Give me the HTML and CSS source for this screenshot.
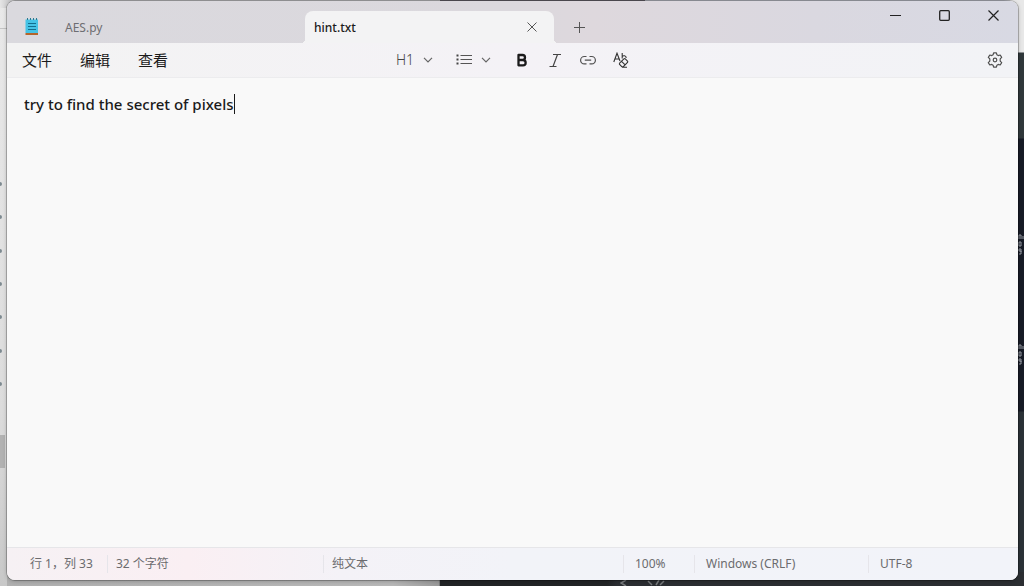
FILE: index.html
```html
<!DOCTYPE html>
<html lang="zh-CN">
<head>
<meta charset="UTF-8">
<meta name="viewport" content="width=device-width, initial-scale=1.0">
<title>hint.txt</title>
<link rel="stylesheet" href="styles.css">
</head>
<body>

<!-- what shows around the window -->
<div class="desktop" aria-hidden="true">
  <div class="desk-top"></div>
  <svg class="desk-left" width="7" height="480" viewBox="0 0 7 480">
    <path d="M0 28.500h7" stroke="#c4c4c4"/>
    <g fill="#7d8a90">
      <circle cx="0" cy="184" r="2"/>
      <circle cx="0" cy="217" r="2"/>
      <circle cx="0" cy="251" r="2"/>
      <circle cx="0" cy="284" r="2"/>
      <circle cx="0" cy="317" r="2"/>
      <circle cx="0" cy="351" r="2"/>
      <circle cx="0" cy="384" r="2"/>
    </g>
    <path d="M0 435h5v33h-5z" fill="#b2b2b2"/>
  </svg>
  <div class="desk-right"></div>
  <svg class="desk-marks" width="6" height="140" viewBox="0 0 6 140">
    <g fill="none" stroke="#9a9ea6">
      <path d="M1 6V2h2v4M5 3v3M1 9h2v4H1zM3 19V16H1v2h2v3H1"/>
      <path d="M1 116v-4h2v4M5 113v3M1 119h2v4H1zM3 129v-3H1v2h2v3H1"/>
    </g>
  </svg>
  <div class="desk-bottom"></div>
  <svg class="desk-code" width="50" height="6" viewBox="0 0 50 6">
    <path d="M6 0l-5 3 5 3M28 1l4 4M36 5l3-5M40 5l4-4" fill="none" stroke="#777a7c" stroke-width="1.500"/>
  </svg>
</div>

<div class="window">
  <header class="titlebar">
    <svg class="app-icon" width="14" height="18" viewBox="0 0 14 18">
      <path d="M.5 1.500h12.500V15H.5z" fill="#45c3e6"/>
      <path d="M.5 15h12.500v2H.5z" fill="#b5652b"/>
      <path d="M2.500 0v2M5.500 0v2M8.500 0v2M11.500 0v2" stroke="#2b7890"/>
      <path d="M3 5.500h8M3 8.500h8M3 11.500h8" stroke="#136f8e" stroke-width="1.100"/>
    </svg>
    <button class="tab" type="button">AES.py</button>
    <div class="tab tab-active">
      <span>hint.txt</span>
      <button class="tab-close" type="button" aria-label="关闭标签页">
        <svg width="10" height="10" viewBox="0 0 10 10"><path d="M.5.5l9 9M9.500.5l-9 9" stroke="#555"/></svg>
      </button>
    </div>
    <button class="tab-new" type="button" aria-label="新建标签页">
      <svg width="11" height="11" viewBox="0 0 11 11"><path d="M5.500 0v11M0 5.500h11" stroke="#555"/></svg>
    </button>
    <div class="caption">
      <button type="button" aria-label="最小化">
        <svg width="11" height="11" viewBox="0 0 11 11"><path d="M0 5.500h11" stroke="#222"/></svg>
      </button>
      <button type="button" aria-label="最大化">
        <svg width="11" height="11" viewBox="0 0 11 11"><rect x=".7" y=".7" width="9.600" height="9.600" rx="1" fill="none" stroke="#222" stroke-width="1.300"/></svg>
      </button>
      <button type="button" aria-label="关闭">
        <svg width="11" height="11" viewBox="0 0 11 11"><path d="M.5.5l10 10M10.500.5l-10 10" stroke="#222" stroke-width="1.200"/></svg>
      </button>
    </div>
  </header>

  <div class="toolbar">
    <nav class="menu">
      <button type="button">文件</button>
      <button type="button">编辑</button>
      <button type="button">查看</button>
    </nav>
    <div class="format">
      <button class="with-arrow" type="button">
        <span>H1</span>
        <svg width="10" height="6" viewBox="0 0 10 6"><path d="M1 .8l4 4 4-4" fill="none" stroke="#666" stroke-width="1.200"/></svg>
      </button>
      <button class="with-arrow" type="button" aria-label="列表">
        <svg width="16" height="12" viewBox="0 0 16 12">
          <path d="M4.500 1.500H16M4.500 5.500H16M4.500 9.500H16" stroke="#555" stroke-width="1.200"/>
          <path d="M.5 1.500h2M.5 5.500h2M.5 9.500h2" stroke="#444" stroke-width="1.800"/>
        </svg>
        <svg width="10" height="6" viewBox="0 0 10 6"><path d="M1 .8l4 4 4-4" fill="none" stroke="#666" stroke-width="1.200"/></svg>
      </button>
      <button type="button" aria-label="加粗">
        <svg width="16" height="16" viewBox="0 0 16 16"><path d="M4.500 3h4a2.400 2.400 0 0 1 0 5h-4zM4.500 8H9a2.500 2.500 0 0 1 0 5.300H4.500z" fill="none" stroke="#1b1b1b" stroke-width="2.300" stroke-linejoin="round"/></svg>
      </button>
      <button type="button" aria-label="斜体">
        <svg width="16" height="16" viewBox="0 0 16 16"><path d="M6 2.500h8M2.500 14.500h7M10.500 2.500l-4.500 12" fill="none" stroke="#444" stroke-width="1.200"/></svg>
      </button>
      <button type="button" aria-label="链接">
        <svg width="16" height="16" viewBox="0 0 16 16"><path d="M6.500 4.500H4.300a3.700 3.700 0 0 0 0 7.400h2.200M9.500 4.500h2.200a3.700 3.700 0 0 1 0 7.400H9.500M4.800 8.200h6.400" fill="none" stroke="#505050" stroke-width="1.200"/></svg>
      </button>
      <button type="button" aria-label="清除格式">
        <svg width="16" height="16" viewBox="0 0 16 16" fill="none" stroke="#333" stroke-width="1.100">
          <path d="M.8 10L4 1.200 7 9M2 7h4M9.200 1v5.500M9.200 4.500c1-1.300 4-1 4 1.500"/>
          <path d="M6.600 11.200l4.300-4.300q.7-.6 1.400 0l2.200 2.200q.6.700 0 1.400l-4.200 4.200H8.800l-2.200-2.200q-.5-.6 0-1.300zM8.600 9.300l3.500 3.500M9 15.200h5"/>
        </svg>
      </button>
    </div>
    <button class="settings" type="button" aria-label="设置">
      <svg width="16" height="16" viewBox="0 0 16 16" fill="none" stroke="#505050" stroke-width="1.200" stroke-linejoin="round">
        <path d="M6.600.8h2.800l.5 2 1.300.8 2-.6 1.500 2.400-1.500 1.500v2.200l1.500 1.500-1.500 2.400-2-.6-1.300.8-.5 2H6.600l-.5-2-1.300-.8-2 .6-1.500-2.400 1.500-1.500V6.900L1.300 5.400 2.800 3l2 .6 1.300-.8z"/>
        <circle cx="8" cy="8" r="1.800"/>
      </svg>
    </button>
  </div>

  <main class="editor">
    <textarea class="text" rows="1" cols="26" aria-label="文本编辑器" spellcheck="false">try to find the secret of pixels</textarea>
    <span class="caret"></span>
  </main>

  <footer class="status">
    <span class="cell position">行 1，列 33</span>
    <span class="cell count">32 个字符</span>
    <span class="cell kind">纯文本</span>
    <span class="cell zoom">100%</span>
    <span class="cell eol">Windows (CRLF)</span>
    <span class="cell encoding">UTF-8</span>
  </footer>
</div>

</body>
</html>
```
FILE: styles.css
```css
* {
  box-sizing: border-box;
  padding: 0;
  margin: 0;
}

body {
  height: 100vh;
  padding: 1px 6px 6px 7px;
  overflow: hidden;
  background: linear-gradient(#e9e9e9, #dcdcdc 70%, #c8c8c8);
  font-family: "Noto Sans", "Noto Sans CJK SC", sans-serif;
  font-size: 12px;
  color: #1b1b1b;
}

button {
  display: flex;
  align-items: center;
  justify-content: center;
  border: none;
  background: none;
  font: inherit;
  color: inherit;
}

svg {
  display: block;
}

/* desktop behind the window */
.desktop {
  position: absolute;
  inset: 0;
  overflow: hidden;
}

.desktop > * {
  position: absolute;
}

.desk-top {
  top: 0;
  left: 0;
  right: 0;
  height: 8px;
  background: linear-gradient(90deg, #e6e6e6, #c4c4c6 1%, #c4c4c6 43%, #66636a 43%, #66636a 63%, #b9bcc6 63%, #b9bcc6 98%, #e8e8e8 99%);
}

.desk-left {
  top: 0;
  left: 0;
}

.desk-right {
  top: 0;
  right: 0;
  bottom: 0;
  width: 14px;
  background: linear-gradient(#e8e8e8 52px, #30383b 53px, #30383b 138px, #171b26 139px, #171b26 411px, #2b3237 412px);
}

.desk-marks {
  top: 233px;
  right: 0;
}

.desk-bottom {
  left: 7px;
  right: 0;
  bottom: 0;
  height: 14px;
  background: linear-gradient(90deg, #b0b0b0, #b8b8b8 38%, #999 42.500%, #222426 42.600%, #222426 59%, #2b2e32 60%);
}

.desk-code {
  left: 620px;
  bottom: 0;
}

/* window */
.window {
  position: relative;
  display: flex;
  flex-direction: column;
  height: 100%;
  overflow: hidden;
  border-radius: 8px;
  background: #f9f9f9;
  box-shadow: 0 0 0 1px rgba(0, 0, 0, 0.22), 0 1px 4px rgba(0, 0, 0, 0.25);
}

.titlebar {
  display: flex;
  align-items: flex-end;
  height: 42px;
  background: linear-gradient(90deg, #dad9de, #dbd8dd 50%, #ded8dd 58%, #dad8e0 80%, #d8d9e3);
}

.app-icon {
  align-self: center;
  flex: none;
  margin: 10px 0 0 18px;
}

.tab {
  display: flex;
  align-items: center;
  justify-content: flex-start;
  flex: 0 1 249px;
  height: 32px;
  margin-left: 8px;
  padding: 0 18px;
  color: #6e6e72;
}

.tab-active {
  position: relative;
  justify-content: space-between;
  margin-left: 9px;
  padding: 0 17px 0 9px;
  border-radius: 8px 8px 0 0;
  background: #f3f3f4;
  color: #1b1b1b;
}

.tab-active span {
  font-weight: 500;
}

/* curved feet of the open tab */
.tab-active::before,
.tab-active::after {
  content: "";
  position: absolute;
  bottom: 0;
  width: 4px;
  height: 4px;
}

.tab-active::before {
  left: -4px;
  background: radial-gradient(circle at 0 0, transparent 4px, #f3f3f4 4px);
}

.tab-active::after {
  right: -4px;
  background: radial-gradient(circle at 100% 0, transparent 4px, #f3f3f4 4px);
}

.tab-new {
  width: 32px;
  height: 32px;
  margin-left: 9px;
}

.caption {
  display: flex;
  align-self: flex-start;
  margin-left: auto;
}

.caption button {
  width: 49px;
  height: 29px;
}

.toolbar {
  display: grid;
  grid-template-columns: 1fr auto 1fr;
  align-items: center;
  height: 35px;
  padding: 0 15px 1px;
  border-bottom: 1px solid #ececee;
  background: linear-gradient(90deg, #f3f3f3, #f4f2f6 50%, #f2f3f6);
}

.menu {
  display: flex;
  gap: 28px;
  font-size: 15px;
}

.format {
  display: flex;
  align-items: center;
  gap: 17px;
}

.with-arrow {
  gap: 9px;
  margin-right: 6px;
  color: #444;
  font-size: 14px;
  font-weight: 300;
  line-height: 20px;
}

.settings {
  justify-self: end;
}

.editor {
  display: flex;
  flex: 1;
  align-items: flex-start;
  padding: 16px 17px;
}

.text {
  field-sizing: content;
  border: none;
  outline: none;
  resize: none;
  overflow: hidden;
  background: none;
  color: #1b1b1b;
  font-family: "Noto Sans", "Noto Sans CJK SC", sans-serif;
  font-size: 15px;
  font-weight: 500;
  line-height: 20px;
  white-space: pre;
}

.caret {
  width: 1px;
  height: 20px;
  background: #1b1b1b;
}

.status {
  display: flex;
  align-items: center;
  height: 33px;
  border-top: 1px solid #e6e6e9;
  background: linear-gradient(90deg, #f6f1f4, #faeff3 18%, #f4f2f7 33%, #f2f3f8 50%, #f2f3f9);
  color: #6b6b6e;
}

.cell {
  height: 18px;
  padding-left: 11px;
  border-left: 1px solid #e6e5ea;
  line-height: 18px;
  white-space: nowrap;
}

.position {
  width: 100px;
  padding-left: 23px;
  border-left: none;
}

.count {
  width: 216px;
  padding-left: 8px;
}

.kind {
  flex: 1;
  padding-left: 8px;
}

.zoom {
  width: 71px;
}

.eol {
  width: 174px;
}

.encoding {
  width: 150px;
}
```
